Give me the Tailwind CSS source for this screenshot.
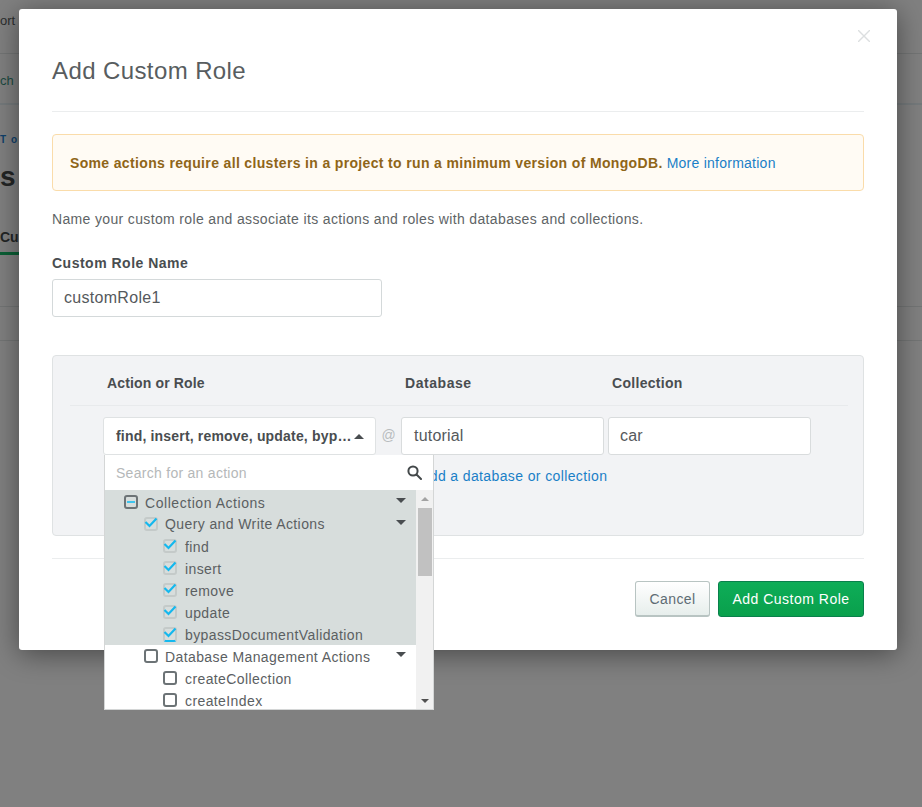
<!DOCTYPE html>
<html lang="en">
<head>
  <meta charset="UTF-8">
  <title>Add Custom Role</title>
  <script src="https://cdn.jsdelivr.net/npm/@tailwindcss/browser@4"></script>
</head>
<body class="relative h-[807px] w-[922px] overflow-hidden bg-[#808080] font-['Liberation_Sans',sans-serif] text-[#4a4f52]">
  <!-- page behind the backdrop -->
  <div class="h-[54px] border-b border-[#737575] pt-[11px] text-[13px] text-[#2c2e2e]">ort</div>
  <div class="h-[51px] border-b-2 border-[#757a7c] pt-[17px] text-[13px] text-[#1c4a40]">ch</div>
  <div class="pt-[29px] text-[10px] font-bold leading-[12px] tracking-[1px] text-[#10406a]">T o</div>
  <div class="mt-[14px] text-[28px] font-bold leading-[34px] text-[#232525]">s</div>
  <div class="mt-[33px] h-[28px] w-[30px] border-b-[3px] border-[#0a5f35] text-[14px] font-bold leading-[20px] text-[#232525]">Cus</div>
  <div class="mt-[51px] h-[1px] bg-[#737575]"></div>
  <div class="mt-[33px] h-[1px] bg-[#737575]"></div>

  <!-- modal -->
  <div class="absolute left-[19px] top-[9px] h-[641px] w-[878px] rounded-[3px] bg-white px-[33px] shadow-[0_4px_28px_rgba(0,0,0,0.45)]">
    <svg class="absolute right-[27px] top-[21px] h-[12px] w-[12px]" viewBox="0 0 12 12" fill="none" stroke="#dcdfe0" stroke-width="1.4"><path d="M0 0 12 12M12 0 0 12"/></svg>

    <div class="h-[103px] border-b border-[#ebedee] pt-[45px]">
      <h2 class="text-[24px] leading-[34px] tracking-[0.4px] text-[#585d60]">Add Custom Role</h2>
    </div>

    <div class="mt-[22px] flex h-[57px] items-center rounded-[4px] border border-[#fadcaa] bg-[#fffbf4] pl-[17px] pt-[2px] text-[14px]">
      <span class="font-bold tracking-[0.345px] text-[#8f6518]">Some actions require all clusters in a project to run a minimum version of MongoDB.</span>
      <span class="ml-[4px] tracking-[0.25px] text-[#1a7fc7]">More information</span>
    </div>

    <p class="mt-[20px] text-[14px] leading-[16px] tracking-[0.35px] text-[#5e6466]">Name your custom role and associate its actions and roles with databases and collections.</p>

    <label class="mt-[28px] block text-[14px] font-bold leading-[16px] tracking-[0.5px] text-[#494d50]">Custom Role Name</label>
    <div class="mt-[8px] flex h-[38px] w-[330px] items-center rounded-[3px] border border-[#d4d9da] px-[11px] text-[16px] tracking-[0.3px] text-[#55595c]">customRole1</div>

    <!-- role panel -->
    <div class="relative mt-[38px] h-[181px] rounded-[4px] border border-[#dfe2e3] bg-[#f2f3f5]">
      <div class="ml-[17px] mr-[15px] flex h-[50px] items-center border-b border-[#e8eaec] pt-[6px] text-[14px] font-bold tracking-[0.3px] text-[#494d50]">
        <span class="ml-[37px] w-[298px] tracking-[0.15px]">Action or Role</span>
        <span class="w-[207px] tracking-[0.55px]">Database</span>
        <span>Collection</span>
      </div>
      <div class="mt-[11px] flex pl-[50px]">
        <div class="flex h-[38px] w-[273px] items-center rounded-[3px] border border-[#dfe2e3] bg-white pl-[12px] text-[14px] font-bold tracking-[0.18px] text-[#494d50]">
          <span class="w-[238px] whitespace-nowrap">find, insert, remove, update, byp…</span>
          <span class="h-0 w-0 border-x-[5px] border-b-[5px] border-x-transparent border-b-[#494d50]"></span>
        </div>
        <span class="flex w-[25px] items-center justify-center pb-[2px] text-[14px] text-[#b8bcbe]">@</span>
        <div class="flex h-[38px] w-[203px] items-center rounded-[3px] border border-[#d9dcdd] bg-white px-[12px] text-[16px] tracking-[0.2px] text-[#55595c]">tutorial</div>
        <div class="ml-[4px] flex h-[38px] w-[203px] items-center rounded-[3px] border border-[#d9dcdd] bg-white px-[11px] text-[16px] tracking-[0.2px] text-[#55595c]">car</div>
      </div>
      <p class="ml-[367px] mt-[12px] whitespace-nowrap text-[14px] leading-[18px] tracking-[0.38px] text-[#1a7fc7]">Add a database or collection</p>

      <!-- action dropdown -->
      <div class="absolute left-[51px] top-[99px] z-10 h-[255px] w-[330px] overflow-hidden border border-t-0 border-[#d4d6d6] bg-white">
        <div class="flex h-[35px] items-center justify-between pl-[11px] pr-[11px] pt-[2px] text-[14px] tracking-[0.28px] text-[#b5b8b9]">
          <span>Search for an action</span>
          <svg class="-mt-[2px] h-[15px] w-[15px]" viewBox="0 0 15 15" fill="none" stroke="#43484a" stroke-width="2"><circle cx="6" cy="6" r="4.6"/><path d="M9.5 9.5 14 14" stroke-linecap="round"/></svg>
        </div>
        <div class="flex h-[219px]">
          <div class="w-[311px] text-[14px] tracking-[0.4px] text-[#5b6062]">
            <div class="bg-[#d7dddc] pt-[1px]">
              <div class="flex h-[22px] items-center pl-[19px] pr-[10px]">
                <span class="flex h-[14px] w-[14px] items-center justify-center rounded-[3px] border-2 border-[#6c7376]"><span class="h-[2px] w-[8px] bg-[#3dc4ee]"></span></span>
                <span class="ml-[7px] flex-1 pt-[2px] tracking-[0.55px]">Collection Actions</span>
                <span class="-mt-[3px] h-0 w-0 border-x-[5px] border-t-[5px] border-x-transparent border-t-[#494d50]"></span>
              </div>
              <div class="flex h-[22px] items-center pl-[39px] pr-[10px]">
                <span class="flex h-[14px] w-[14px] items-center justify-center rounded-[3px] border-2 border-[#c4cac9]"><svg class="-mt-[3px] h-[11px] w-[14px] shrink-0" viewBox="0 0 14 11" fill="none" stroke="#14b8ee" stroke-width="2.2"><path d="M1.5 5 5.5 9 12.5 1.5"/></svg></span>
                <span class="ml-[7px] flex-1">Query and Write Actions</span>
                <span class="-mt-[3px] h-0 w-0 border-x-[5px] border-t-[5px] border-x-transparent border-t-[#494d50]"></span>
              </div>
              <div class="flex h-[22px] items-center pl-[58px]">
                <span class="flex h-[14px] w-[14px] items-center justify-center rounded-[3px] border-2 border-[#c4cac9]"><svg class="-mt-[3px] h-[11px] w-[14px] shrink-0" viewBox="0 0 14 11" fill="none" stroke="#14b8ee" stroke-width="2.2"><path d="M1.5 5 5.5 9 12.5 1.5"/></svg></span>
                <span class="ml-[8px] pt-[2px]">find</span>
              </div>
              <div class="flex h-[22px] items-center pl-[58px]">
                <span class="flex h-[14px] w-[14px] items-center justify-center rounded-[3px] border-2 border-[#c4cac9]"><svg class="-mt-[3px] h-[11px] w-[14px] shrink-0" viewBox="0 0 14 11" fill="none" stroke="#14b8ee" stroke-width="2.2"><path d="M1.5 5 5.5 9 12.5 1.5"/></svg></span>
                <span class="ml-[8px] pt-[2px]">insert</span>
              </div>
              <div class="flex h-[22px] items-center pl-[58px]">
                <span class="flex h-[14px] w-[14px] items-center justify-center rounded-[3px] border-2 border-[#c4cac9]"><svg class="-mt-[3px] h-[11px] w-[14px] shrink-0" viewBox="0 0 14 11" fill="none" stroke="#14b8ee" stroke-width="2.2"><path d="M1.5 5 5.5 9 12.5 1.5"/></svg></span>
                <span class="ml-[8px] pt-[2px]">remove</span>
              </div>
              <div class="flex h-[22px] items-center pl-[58px]">
                <span class="flex h-[14px] w-[14px] items-center justify-center rounded-[3px] border-2 border-[#c4cac9]"><svg class="-mt-[3px] h-[11px] w-[14px] shrink-0" viewBox="0 0 14 11" fill="none" stroke="#14b8ee" stroke-width="2.2"><path d="M1.5 5 5.5 9 12.5 1.5"/></svg></span>
                <span class="ml-[8px] pt-[2px]">update</span>
              </div>
              <div class="flex h-[22px] items-center pl-[58px]">
                <span class="flex h-[15px] w-[14px] items-center justify-center rounded-[3px] border-2 border-[#c4cac9] border-b-[#14b8ee]"><svg class="-mt-[3px] h-[11px] w-[14px] shrink-0" viewBox="0 0 14 11" fill="none" stroke="#14b8ee" stroke-width="2.2"><path d="M1.5 5 5.5 9 12.5 1.5"/></svg></span>
                <span class="ml-[8px] pt-[2px]">bypassDocumentValidation</span>
              </div>
            </div>
            <div class="flex h-[22px] items-center pl-[39px] pr-[10px]">
              <span class="h-[14px] w-[14px] rounded-[3px] border-2 border-[#6c7376]"></span>
              <span class="ml-[7px] flex-1 pt-[2px]">Database Management Actions</span>
              <span class="-mt-[3px] h-0 w-0 border-x-[5px] border-t-[5px] border-x-transparent border-t-[#494d50]"></span>
            </div>
            <div class="flex h-[22px] items-center pl-[58px]">
              <span class="h-[14px] w-[14px] rounded-[3px] border-2 border-[#6c7376]"></span>
              <span class="ml-[8px] pt-[2px]">createCollection</span>
            </div>
            <div class="flex h-[22px] items-center pl-[58px]">
              <span class="h-[14px] w-[14px] rounded-[3px] border-2 border-[#6c7376]"></span>
              <span class="ml-[8px] pt-[2px]">createIndex</span>
            </div>
          </div>
          <!-- scrollbar -->
          <div class="flex w-[17px] flex-col items-center bg-[#f1f1f1]">
            <span class="mt-[7px] h-0 w-0 border-x-[4px] border-b-[4px] border-x-transparent border-b-[#a3a3a3]"></span>
            <span class="mt-[7px] h-[68px] w-[14px] bg-[#c1c1c1]"></span>
            <span class="mt-auto mb-[6px] h-0 w-0 border-x-[4px] border-t-[4px] border-x-transparent border-t-[#505050]"></span>
          </div>
        </div>
      </div>
    </div>

    <!-- footer -->
    <div class="mt-[22px] flex h-[59px] items-end justify-end gap-[8px] border-t border-[#ebedee]">
      <button class="h-[36px] w-[75px] rounded-[3px] border border-b-2 border-[#b8c4c2] bg-gradient-to-b from-white to-[#e7eeec] pt-[1px] text-[14px] tracking-[0.4px] text-[#5d6c74]">Cancel</button>
      <button class="h-[36px] w-[146px] rounded-[3px] border border-[#09804c] bg-gradient-to-b from-[#0ead58] to-[#09a04c] pt-[1px] text-[14px] tracking-[0.5px] text-white">Add Custom Role</button>
    </div>
  </div>
</body>
</html>
